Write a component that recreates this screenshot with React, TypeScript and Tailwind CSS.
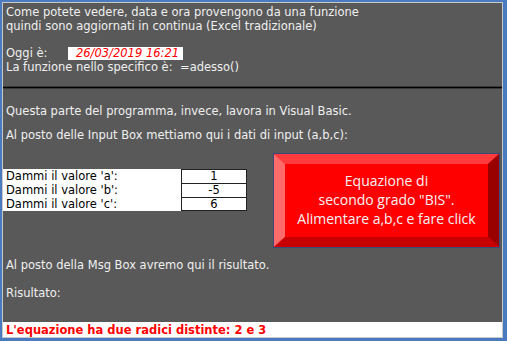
const verdana = "font-['DejaVu_Sans',Verdana,sans-serif]";

function TextRow({ h, children, className = '' }: { h: string; children?: React.ReactNode; className?: string }) {
  return <div className={`${h} flex items-center pl-[3px] whitespace-nowrap ${className}`}>{children}</div>;
}

const inputs = [
  { label: "Dammi il valore 'a':", value: '1' },
  { label: "Dammi il valore 'b':", value: '-5' },
  { label: "Dammi il valore 'c':", value: '6' },
];

function BevelButton() {
  return (
    <div className="relative mr-[2px] mt-[11px] h-[95px] w-[227px] border border-[#3b4a7a] bg-[#ff0000]">
      <svg className="absolute inset-0 h-full w-full" viewBox="0 0 225 93" preserveAspectRatio="none">
        <polygon points="0,0 225,0 214,10 11,10" fill="#ff3b3b" />
        <polygon points="0,0 11,10 11,83 0,93" fill="#ff6b6b" />
        <polygon points="225,0 225,93 214,83 214,10" fill="#990000" />
        <polygon points="0,93 11,83 214,83 225,93" fill="#c80000" />
      </svg>
      <div className="relative flex h-full flex-col items-center justify-center pb-[3px] text-center font-['Open_Sans',sans-serif] text-[14px] leading-[19px] text-[#f4f4f4]">
        <span>Equazione di</span>
        <span>secondo grado "BIS".</span>
        <span>Alimentare a,b,c e fare click</span>
      </div>
    </div>
  );
}

export default function App() {
  return (
    <div className={`h-[341px] w-[507px] bg-[#4a7ac0] pb-[3px] pl-[2px] pr-[4px] pt-[2px] ${verdana}`}>
      <div className="flex h-full flex-col border border-[#c8c8c8] bg-[#595959] text-[11.5px] leading-[14px] text-[#f0f0f0]">
        <TextRow h="h-[15px] mt-[1px]">Come potete vedere, data e ora provengono da una funzione</TextRow>
        <TextRow h="h-[14px]">quindi sono aggiornati in continua (Excel tradizionale)</TextRow>
        <div className="h-[13px]" />
        <TextRow h="h-[14px]">
          <span className="w-[62px]">Oggi è:</span>
          <span className="flex h-[13px] w-[115px] items-center justify-center bg-white pl-[4px] leading-[13px] italic text-[#ff0000]">
            26/03/2019 16:21
          </span>
        </TextRow>
        <TextRow h="h-[14px]">
          <span className="w-[174px]">La funzione nello specifico è:</span>
          <span>=adesso()</span>
        </TextRow>
        <div className="h-[12px]" />
        <div className="h-[3px] border-y border-[#3a3a3a] bg-black" />
        <div className="h-[15px]" />
        <TextRow h="h-[14px]">Questa parte del programma, invece, lavora in Visual Basic.</TextRow>
        <div className="h-[10px]" />
        <TextRow h="h-[14px]">Al posto delle Input Box mettiamo qui i dati di input (a,b,c):</TextRow>
        <div className="flex h-[108px] items-start justify-between">
          <div className="mt-[27px] flex flex-col">
            {inputs.map((r, i) => (
              <div key={r.label} className="flex h-[14px] bg-white text-black">
                <span className="w-[178px] pl-[3px] leading-[14px]">{r.label}</span>
                <span
                  className={`w-[66px] border-x border-t border-[#222] bg-white text-center leading-[13px] ${i === 2 ? 'border-b' : ''}`}
                >
                  {r.value}
                </span>
              </div>
            ))}
          </div>
          <BevelButton />
        </div>
        <TextRow h="h-[14px] mt-[8px]">Al posto della Msg Box avremo qui il risultato.</TextRow>
        <div className="h-[14px]" />
        <TextRow h="h-[14px]">Risultato:</TextRow>
        <div className="flex-1" />
        <TextRow h="h-[15px]" className="bg-white font-bold text-[#ff0000]">
          L'equazione ha due radici distinte: 2 e 3
        </TextRow>
      </div>
    </div>
  );
}
